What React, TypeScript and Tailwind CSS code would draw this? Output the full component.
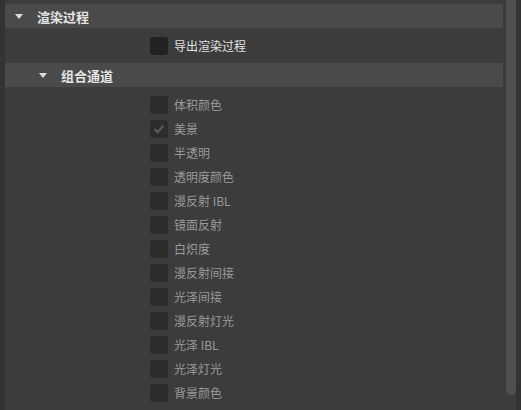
import React from "react";

const items: { label: string; checked?: boolean }[] = [
  { label: "体积颜色" },
  { label: "美景", checked: true },
  { label: "半透明" },
  { label: "透明度颜色" },
  { label: "漫反射 IBL" },
  { label: "镜面反射" },
  { label: "白炽度" },
  { label: "漫反射间接" },
  { label: "光泽间接" },
  { label: "漫反射灯光" },
  { label: "光泽 IBL" },
  { label: "光泽灯光" },
  { label: "背景颜色" },
];

const Tri = () => (
  <svg width="8" height="5" viewBox="0 0 8 5" className="shrink-0">
    <polygon points="0,0 8,0 4,5" fill="#dcdcdc" />
  </svg>
);

export default function App() {
  return (
    <div
      className="w-[521px] h-[410px] bg-[#3c3c3c] flex overflow-hidden text-[12px] leading-none"
      style={{ fontFamily: '"Noto Sans CJK SC", "Noto Sans", sans-serif' }}
    >
      <div className="w-[5px] bg-[#333333] shrink-0" />
      <div className="w-[498px] shrink-0 pt-[4px] flex flex-col">
        <div className="h-[24px] bg-[#4a4a4a] flex items-center pl-[10px]">
          <Tri />
          <span className="ml-[14px] font-bold text-[13px] text-[#e4e4e4]">渲染过程</span>
        </div>
        <div className="h-[35px] flex items-center pl-[145px]">
          <div className="w-[18px] h-[18px] rounded-[3px] bg-[#222222] shrink-0" />
          <span className="ml-[6px] text-[#e2e2e2]">导出渲染过程</span>
        </div>
        <div className="h-[24px] bg-[#4a4a4a] flex items-center pl-[34px]">
          <Tri />
          <span className="ml-[14px] font-bold text-[13px] text-[#e4e4e4]">组合通道</span>
        </div>
        <div className="pt-[6px] flex flex-col">
          {items.map((it) => (
            <div key={it.label} className="h-[24px] flex items-center pl-[145px]">
              <div className="w-[18px] h-[18px] rounded-[3px] bg-[#2c2c2c] shrink-0 flex items-center justify-center">
                {it.checked && (
                  <svg width="12" height="10" viewBox="0 0 12 10">
                    <path d="M1.5 5.2 L4.5 8.2 L10.5 1.5" stroke="#555555" strokeWidth="2.4" fill="none" />
                  </svg>
                )}
              </div>
              <span className="ml-[6px] text-[#9a9a9a]">{it.label}</span>
            </div>
          ))}
        </div>
      </div>
      <div className="w-[3px] shrink-0" />
      <div className="w-[10px] shrink-0 flex flex-col">
        <div className="h-[395px] bg-[#505050] rounded-b-[5px]" />
      </div>
      <div className="w-[5px] bg-[#333333] shrink-0" />
    </div>
  );
}
